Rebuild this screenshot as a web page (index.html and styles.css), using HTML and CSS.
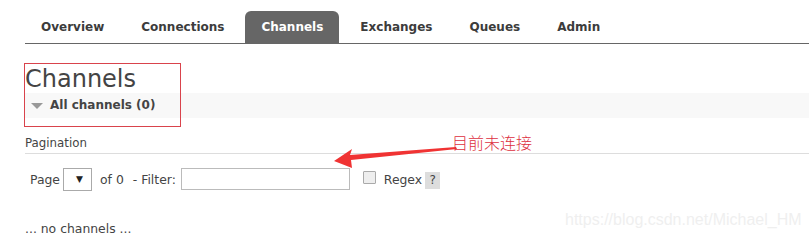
FILE: index.html
```html
<!DOCTYPE html>
<html>
<head>
<meta charset="utf-8">
<link rel="stylesheet" href="styles.css">
</head>
<body>
<div class="page">
  <ul class="tabs">
    <li class="tab">Overview</li>
    <li class="tab">Connections</li>
    <li class="tab active">Channels</li>
    <li class="tab">Exchanges</li>
    <li class="tab">Queues</li>
    <li class="tab">Admin</li>
  </ul>
  <div class="main">
    <h1 class="title">Channels</h1>
    <div class="section-head"><span class="tri"></span>All channels (0)</div>
    <div class="pag-title">Pagination</div>
    <div class="pag-row">
      <span class="lbl">Page</span>
      <span class="select">▼</span>
      <span class="lbl of">of 0</span>
      <span class="lbl filter-lbl">- Filter:</span>
      <span class="filter"></span>
      <span class="check"></span>
      <span class="lbl">Regex</span>
      <span class="help">?</span>
    </div>
    <div class="empty">... no channels ...</div>
  </div>
  <div class="mark-box"></div>
  <svg class="arrow" width="130" height="30" viewBox="0 0 130 30">
    <polygon points="0,21 18,9 16,15 122,7 123,9 17,20 18,28" fill="#f03333"/>
  </svg>
  <div class="note">目前未连接</div>
  <div class="watermark">https://blog.csdn.net/Michael_HM</div>
</div>
</body>
</html>
```
FILE: styles.css
```css
html, body { margin: 0; padding: 0; background: #fff; }
body { font-family: "DejaVu Sans", Verdana, sans-serif; color: #444; }
.page { position: relative; width: 809px; height: 240px; overflow: hidden; }
.tabs {
  list-style: none; margin: 0; padding: 11px 0 0 0; margin-left: 25px;
  display: flex; border-bottom: 1px solid #666; height: 32px;
}
.tab {
  padding: 0 16px; margin-right: 5px; font-weight: bold; font-size: 12px;
  line-height: 32px; color: #3c3c3c; border-radius: 6px 6px 0 0;
}
.tab.active { background: #666; color: #fff; }
.main { padding-left: 25px; }
.title {
  font-weight: normal; font-size: 24px; margin: 0; padding-top: 21px;
  line-height: 28px; color: #444;
}
.section-head {
  margin-top: 0; height: 25px; background: #f8f8f8; font-weight: bold;
  font-size: 12px; line-height: 25px; display: flex; align-items: center;
}
.tri {
  width: 0; height: 0; border-left: 6px solid transparent; border-right: 6px solid transparent;
  border-top: 6px solid #999; margin: 0 7px 0 6px;
}
.pag-title {
  margin-top: 18px; font-size: 11.8px; line-height: 15px; padding-bottom: 2px;
  border-bottom: 1px solid #ddd;
}
.pag-row {
  display: flex; align-items: center; margin-top: 13px; padding-left: 5px;
  font-size: 12.4px; height: 24px;
}
.select {
  height: 23px; border: 1px solid #aaa; margin: 0 8px 0 3px;
  font-size: 9px; display: flex; align-items: center; justify-content: flex-end;
  padding-right: 8px; box-sizing: border-box; width: 29px; color: #222;
}
.of { margin-right: 9px; }
.filter-lbl { margin-right: 5px; }
.filter { width: 169px; height: 22px; border: 1px solid #bbb; box-sizing: border-box; margin-right: 13px; }
.check {
  width: 11px; height: 11px; border: 1px solid #aaa; background: #eee; border-radius: 1px;
  margin-right: 8px; margin-top: -3px;
}
.help {
  margin-left: 3px; background: #ddd; width: 15px; height: 17px; text-align: center;
  line-height: 17px; margin-top: 2px; font-size: 12px;
}
.empty { margin-top: 31px; font-size: 12.4px; line-height: 14px; }
.mark-box {
  position: absolute; left: 24px; top: 63px; width: 157px; height: 64px;
  border: 1px solid #d9434c; box-sizing: border-box;
}
.arrow { position: absolute; left: 334px; top: 140px; }
.note {
  position: absolute; left: 452px; top: 131px; font-size: 16px; color: #dd3040;
  font-family: "Noto Sans CJK SC", sans-serif; line-height: 22px; font-weight: 300;
}
.watermark {
  position: absolute; left: 565px; top: 211px; font-size: 16px; color: #efefef;
  font-family: "Liberation Sans", Arial, sans-serif;
}
```
